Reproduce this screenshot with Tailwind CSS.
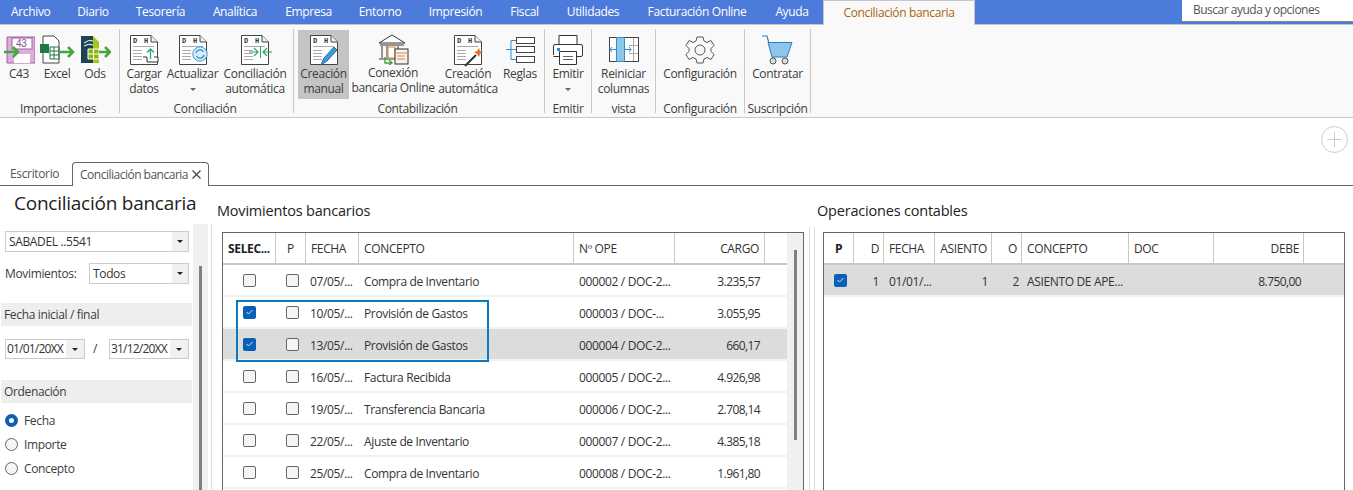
<!DOCTYPE html>
<html lang="es">
<head>
    <meta charset="UTF-8">
    <meta name="viewport" content="width=device-width, initial-scale=1.0">
    <title>Conciliación bancaria</title>
    <script src="https://cdn.jsdelivr.net/npm/@tailwindcss/browser@4"></script>
</head>
<body class="bg-white h-[490px] overflow-hidden font-['Open_Sans',sans-serif] text-[12px] leading-4 tracking-[-0.35px] text-[#3c3c3c]">
    <svg class="hidden">
        <symbol id="doc" viewBox="0 0 28 30">
            <path d="M.5.5H21L27.5 7V29.5H.5Z" fill="#fff" stroke="#444"/>
            <path d="M21 .5V7H27.5" fill="#eee" stroke="#444"/>
            <text x="3" y="8" font-size="7" font-family="Liberation Mono" font-weight="700" fill="#333">D</text>
            <text x="14" y="8" font-size="7" font-family="Liberation Mono" font-weight="700" fill="#333">H</text>
            <path d="M3 11.5H24M3 15.5H12M3 18.5H12M3 21.5H12M3 24.5H12" stroke="#aaa"/>
        </symbol>
    </svg>

    <!-- Menu -->
    <nav class="h-[25px] bg-[#4d7bdb] border-b border-[#c8c8c8] flex text-white">
        <a class="w-[63px] pl-[11px] pt-[4px]">Archivo</a>
        <a class="w-[60px] text-center pt-[4px]">Diario</a>
        <a class="w-[75px] text-center pt-[4px]">Tesorería</a>
        <a class="w-[74px] text-center pt-[4px]">Analítica</a>
        <a class="w-[73px] text-center pt-[4px]">Empresa</a>
        <a class="w-[70px] text-center pt-[4px]">Entorno</a>
        <a class="w-[81px] text-center pt-[4px]">Impresión</a>
        <a class="w-[57px] text-center pt-[4px]">Fiscal</a>
        <a class="w-[80px] text-center pt-[4px]">Utilidades</a>
        <a class="w-[128px] text-center pt-[4px]">Facturación Online</a>
        <a class="w-[62px] text-center pt-[4px]">Ayuda</a>
        <a class="w-[152px] h-[25px] bg-[#f9f9f9] border-x border-t border-[#c8c8c8] text-center pt-[4px] text-[#a8660a]">Conciliación bancaria</a>
        <div class="ml-auto w-[171px] h-[22px] bg-white border-b border-[#888] pl-[11px] pt-[2px] text-[#555] tracking-[-0.5px]">Buscar ayuda y opciones</div>
    </nav>

    <!-- Ribbon -->
    <section class="h-[93px] bg-[#f9f9f9] border-b border-[#c8c8c8] flex pt-[4px]">
        <div class="w-[120px] h-[84px] pt-px border-r border-[#c8c8c8] flex flex-col">
            <div class="flex flex-1">
                <div class="w-[38px] flex flex-col items-center">
                    <svg class="w-[32px] h-[30px] mt-[5px]" viewBox="0 0 32 30">
                        <path d="M6 2H34V28H6Z" transform="translate(-2)" fill="#d9b0d9" stroke="#a65ca6"/>
                        <rect x="9" y="3" width="20" height="11" fill="#fff" stroke="#a65ca6"/>
                        <text x="13" y="12" font-size="10" font-family="Liberation Sans" fill="#8e4a8e">43</text>
                        <rect x="11" y="19" width="16" height="9" fill="#fff"/>
                        <path d="M1 17H14M10 12L15 17L10 22" fill="none" stroke="#45a63c" stroke-width="2.5"/>
                    </svg>
                    <span class="mt-[1px]">C43</span>
                </div>
                <div class="w-[38px] flex flex-col items-center">
                    <svg class="w-[36px] h-[30px] mt-[5px] shrink-0" viewBox="0 0 36 30">
                        <path d="M4 1H15L20 6V28H4Z" fill="#fff" stroke="#444"/>
                        <rect x="1" y="9" width="9" height="9" fill="#1e7a45"/>
                        <path d="M11 12H20V24H11ZM11 16H20M11 20H20M15 12V24" fill="none" stroke="#1e7a45"/>
                        <path d="M21 17H33M29 12L34 17L29 22" fill="none" stroke="#45a63c" stroke-width="2.5"/>
                    </svg>
                    <span class="mt-[1px]">Excel</span>
                </div>
                <div class="w-[38px] flex flex-col items-center">
                    <svg class="w-[32px] h-[30px] mt-[5px] shrink-0" viewBox="0 0 32 30">
                        <path d="M2 1H14V28H2Z" fill="#1f4257"/>
                        <path d="M14 1L20 7V28H14Z" fill="#a8c616"/>
                        <path d="M5 8Q10 4 14 6M5 11Q10 8 14 10" fill="none" stroke="#fff"/>
                        <path d="M9 14H20V24H9ZM14.5 14V24M9 19H20" fill="#8db50f" stroke="#fff"/>
                        <path d="M20 17H30M26 12L31 17L26 22" fill="none" stroke="#45a63c" stroke-width="2.5"/>
                    </svg>
                    <span class="mt-[1px]">Ods</span>
                </div>
            </div>
            <div class="text-center -mb-[4px] pr-[3px]">Importaciones</div>
        </div>

        <div class="w-[174px] h-[84px] pt-px border-r border-[#c8c8c8] flex flex-col">
            <div class="flex flex-1">
                <div class="w-[48px] flex flex-col items-center">
                    <svg class="w-[28px] h-[30px] mt-[5px]"><use href="#doc"/></svg>
                    <svg class="w-[16px] h-[16px] -mt-[18px] ml-[14px]" viewBox="0 0 16 16"><path d="M0 10H4V15H15V10H11" fill="#fff" stroke="#333"/><path d="M7.5 12V2M4 5.5L7.5 2L11 5.5" fill="none" stroke="#2da56b" stroke-width="1.3"/></svg>
                    <span class="mt-[3px] text-center leading-[15px]">Cargar datos</span>
                </div>
                <div class="w-[49px] flex flex-col items-center">
                    <svg class="w-[28px] h-[30px] mt-[5px]"><use href="#doc"/></svg>
                    <svg class="w-[16px] h-[16px] -mt-[19px] ml-[14px]" viewBox="0 0 16 16"><circle cx="8" cy="8" r="7.2" fill="#d9edf9" stroke="#3b95d3"/><path d="M4 7A4 4 0 0 1 11.5 6M12 9A4 4 0 0 1 4.500 10" fill="none" stroke="#3b95d3" stroke-width="1.4"/></svg>
                    <span class="mt-[4px]">Actualizar</span>
                    <span class="mt-[6px] w-0 h-0 border-x-[3px] border-x-transparent border-t-[3px] border-t-[#666]"></span>
                </div>
                <div class="w-[76px] flex flex-col items-center">
                    <svg class="w-[28px] h-[30px] mt-[5px]"><use href="#doc"/></svg>
                    <svg class="w-[24px] h-[12px] -mt-[19px] ml-[12px] mb-[7px]" viewBox="0 0 24 12"><path d="M0 6H9M5 2L9 6L5 10M23 6H14M18 2L14 6L18 10" fill="none" stroke="#2da56b" stroke-width="1.2"/><path d="M11.500 0V12" stroke="#2da56b"/></svg>
                    <span class="mt-[1px] text-center leading-[15px]">Conciliación automática</span>
                </div>
            </div>
            <div class="text-center -mb-[4px] pr-[3px]">Conciliación</div>
        </div>

        <div class="w-[251px] h-[84px] pt-px border-r border-[#c8c8c8] flex flex-col">
            <div class="flex flex-1 pl-[4px]">
                <div class="w-[51px] h-[69px] bg-[#c4c4c4] flex flex-col items-center">
                    <div class="relative w-[28px] h-[30px] mt-[5px]">
                        <svg class="w-[28px] h-[30px]"><use href="#doc"/></svg>
                        <svg class="absolute left-[10px] top-[11px] w-[18px] h-[20px]" viewBox="0 0 18 20"><path d="M1 19L4 12L14 1L17 4L7 15Z" fill="#3b9ad8" stroke="#1f6fa8"/></svg>
                    </div>
                    <span class="mt-[1px] text-center leading-[15px]">Creación manual</span>
                </div>
                <div class="w-[88px] flex flex-col items-center">
                    <svg class="w-[32px] h-[32px] mt-[3px]" viewBox="0 0 32 32">
                        <path d="M2 10L15 2L28 10Z" fill="#fff" stroke="#333"/>
                        <path d="M3 12H27M5 13V25M10 13V25M21 13V25M2 26H20" stroke="#333" fill="none"/>
                        <rect x="11" y="14" width="7" height="11" fill="#fff" stroke="#e08a2e"/>
                        <rect x="18" y="16" width="13" height="15" fill="#f2f2f2" stroke="#333"/>
                        <path d="M18 20H31M20 23H28M20 26H28" stroke="#e08a2e"/>
                        <path d="M8 24V30H15M12 27L15 30L12 32" fill="none" stroke="#45a63c" stroke-width="1.4"/>
                    </svg>
                    <span class="text-center leading-[15px] whitespace-nowrap">Conexión<br>bancaria Online</span>
                </div>
                <div class="w-[62px] flex flex-col items-center">
                    <div class="relative w-[28px] h-[30px] mt-[5px]">
                        <svg class="w-[28px] h-[30px]"><use href="#doc"/></svg>
                        <svg class="absolute left-[10px] top-[12px] w-[20px] h-[20px]" viewBox="0 0 20 20"><path d="M1 19L12 8" stroke="#333" stroke-width="2"/><path d="M15 1L16 4L19 5L16 7L15 10L13 7L10 5L13 4Z" fill="#e0762a"/></svg>
                    </div>
                    <span class="mt-[1px] text-center leading-[15px] whitespace-nowrap">Creación<br>automática</span>
                </div>
                <div class="w-[42px] flex flex-col items-center">
                    <svg class="w-[30px] h-[30px] mt-[5px]" viewBox="0 0 30 30">
                        <path d="M1 14.500H11M6 5.500V24.500M6 5.500H11M6 24.500H11" fill="none" stroke="#2f8fd0"/>
                        <rect x="11.500" y="2.500" width="18" height="6" fill="#fff" stroke="#444"/>
                        <rect x="11.500" y="11.500" width="18" height="6" fill="#fff" stroke="#444"/>
                        <rect x="11.500" y="21.500" width="18" height="6" fill="#fff" stroke="#444"/>
                    </svg>
                    <span class="mt-[1px]">Reglas</span>
                </div>
            </div>
            <div class="text-center -mb-[4px] pr-[3px]">Contabilización</div>
        </div>

        <div class="w-[47px] h-[84px] pt-px border-r border-[#c8c8c8] flex flex-col items-center">
            <svg class="w-[30px] h-[30px] mt-[5px] flex-none" viewBox="0 0 30 30">
                <path d="M6 10V.5H24V10" fill="#fff" stroke="#333"/>
                <path d="M.5 20V11Q.5 9.500 2 9.500H28Q29.500 9.500 29.500 11V20Q29.500 21.500 28 21.500H.5" fill="#fff" stroke="#333"/>
                <rect x="4" y="13" width="3" height="3" fill="#2f8fd0"/>
                <path d="M6.500 16.500H23.500V29.500H6.500Z" fill="#fff" stroke="#333"/>
                <path d="M10 21.500H20M10 24.500H20" stroke="#666"/>
            </svg>
            <span class="mt-[1px]">Emitir</span>
            <span class="mt-[6px] w-0 h-0 border-x-[3px] border-x-transparent border-t-[3px] border-t-[#666]"></span>
            <span class="mt-auto -mb-[4px]">Emitir</span>
        </div>

        <div class="w-[64px] h-[84px] pt-px border-r border-[#c8c8c8] flex flex-col items-center">
            <svg class="w-[30px] h-[26px] mt-[7px] flex-none" viewBox="0 0 30 26">
                <rect x=".5" y=".5" width="29" height="24" fill="#fff" stroke="#444"/>
                <path d="M20 8.500H29M20 16.500H29M24.500 1V24" stroke="#aaa"/>
                <rect x="7.500" y=".5" width="8" height="24" fill="#8ec6ea" stroke="#2f8fd0"/>
                <path d="M1 12.500H7M3 10L1 12.500L3 15M16 12.500H22M20 10L22 12.500L20 15" fill="none" stroke="#2f8fd0"/>
            </svg>
            <span class="mt-[3px] text-center leading-[15px]">Reiniciar columnas</span>
            <span class="mt-auto -mb-[4px]">vista</span>
        </div>

        <div class="w-[89px] h-[84px] pt-px border-r border-[#c8c8c8] flex flex-col items-center">
            <svg class="w-[30px] h-[30px] mt-[5px] flex-none" viewBox="0 0 30 30">
                <path d="M12 2H18L19 6L22 7.500L26 5.500L29 10.500L26 13.500V16.500L29 19.500L26 24.500L22 22.500L19 24L18 28H12L11 24L8 22.500L4 24.500L1 19.500L4 16.500V13.500L1 10.500L4 5.500L8 7.500L11 6Z" fill="none" stroke="#555"/>
                <circle cx="15" cy="15" r="5" fill="none" stroke="#555"/>
            </svg>
            <span class="mt-[1px]">Configuración</span>
            <span class="mt-auto -mb-[4px]">Configuración</span>
        </div>

        <div class="w-[66px] h-[84px] pt-px border-r border-[#c8c8c8] flex flex-col items-center">
            <svg class="w-[32px] h-[30px] mt-[5px] flex-none" viewBox="0 0 32 30">
                <path d="M0 1H5L11 23" fill="none" stroke="#2f7fc0" stroke-width="1.2"/>
                <path d="M6 7.500H30L25 22H10Z" fill="#8ec6ea" stroke="#2f7fc0"/>
                <circle cx="11" cy="26" r="3" fill="#ddd" stroke="#555"/>
                <circle cx="23" cy="26" r="3" fill="#ddd" stroke="#555"/>
            </svg>
            <span class="mt-[1px]">Contratar</span>
            <span class="mt-auto -mb-[4px] whitespace-nowrap">Suscripción</span>
        </div>
    </section>

    <!-- Document tabs -->
    <div class="h-[68px] border-b border-[#666] flex flex-col">
        <div class="h-[44px] flex justify-end pt-[8px] pr-[5px]">
            <div class="w-[27px] h-[27px] rounded-full border border-[#ccc] relative">
                <span class="absolute left-[5px] top-[12px] w-[15px] h-px bg-[#ccc]"></span>
                <span class="absolute left-[12px] top-[5px] h-[15px] w-px bg-[#ccc]"></span>
            </div>
        </div>
        <div class="flex items-end h-[23px]">
            <div class="w-[72px] pl-[10px] pb-[3px] text-[#555]">Escritorio</div>
            <div class="w-[137px] h-[24px] -mb-px bg-white border-x border-t border-[#666] rounded-t-[4px] flex items-center pl-[7px] gap-[4px] text-[#555] whitespace-nowrap tracking-[-0.5px]">
                Conciliación bancaria
                <svg class="w-[9px] h-[9px] flex-none" viewBox="0 0 9 9"><path d="M.5.5L8.500 8.500M8.500.5L.5 8.500" stroke="#444" stroke-width="1.2"/></svg>
            </div>
        </div>
    </div>

    <main class="flex h-[304px] relative overflow-hidden">
        <!-- Filters -->
        <aside class="w-[193px] flex-none">
            <h1 class="text-[19px] leading-6 text-[#222] whitespace-nowrap pl-[14px] pt-[5px] tracking-[-0.25px]">Conciliación bancaria</h1>
            <div class="mt-[16px] ml-[5px] w-[184px] h-[21px] border border-[#ccc] flex justify-between">
                <span class="pl-[3px] leading-[19px] text-[#333]">SABADEL ..5541</span>
                <span class="w-[16px] bg-[#f0f0f0] flex items-center justify-center"><span class="w-0 h-0 border-x-[3px] border-x-transparent border-t-[3px] border-t-[#222]"></span></span>
            </div>
            <div class="mt-[11px] ml-[5px] flex items-center">
                <span class="w-[84px]">Movimientos:</span>
                <div class="w-[100px] h-[21px] border border-[#ccc] flex justify-between">
                    <span class="pl-[3px] leading-[19px] text-[#333]">Todos</span>
                    <span class="w-[16px] bg-[#f0f0f0] flex items-center justify-center"><span class="w-0 h-0 border-x-[3px] border-x-transparent border-t-[3px] border-t-[#222]"></span></span>
                </div>
            </div>
            <div class="mt-[19px] ml-[1px] w-[191px] h-[23px] bg-[#eeeeee] pl-[3px] leading-[23px]">Fecha inicial / final</div>
            <div class="mt-[13px] ml-[5px] flex items-center text-[#333]">
                <div class="w-[80px] h-[20px] border border-[#ccc] flex justify-between">
                    <span class="pl-[1px] leading-[18px] whitespace-nowrap tracking-[-0.8px]">01/01/20XX</span>
                    <span class="w-[18px] bg-[#f0f0f0] flex items-center justify-center"><span class="w-0 h-0 border-x-[3px] border-x-transparent border-t-[3px] border-t-[#222]"></span></span>
                </div>
                <span class="w-[24px] pl-[8px]">/</span>
                <div class="w-[80px] h-[20px] border border-[#ccc] flex justify-between">
                    <span class="pl-[1px] leading-[18px] whitespace-nowrap tracking-[-0.8px]">31/12/20XX</span>
                    <span class="w-[18px] bg-[#f0f0f0] flex items-center justify-center"><span class="w-0 h-0 border-x-[3px] border-x-transparent border-t-[3px] border-t-[#222]"></span></span>
                </div>
            </div>
            <div class="mt-[21px] ml-[1px] w-[191px] h-[23px] bg-[#eeeeee] pl-[3px] leading-[23px]">Ordenación</div>
            <div class="mt-[11px] ml-[5px] flex flex-col gap-[11px]">
                <label class="flex items-center gap-[6px] h-[13px]"><span class="w-[13px] h-[13px] rounded-full border-[4px] border-[#0a5fb8] bg-white"></span>Fecha</label>
                <label class="flex items-center gap-[6px] h-[13px]"><span class="w-[13px] h-[13px] rounded-full border border-[#666] bg-[#f5f5f5]"></span>Importe</label>
                <label class="flex items-center gap-[6px] h-[13px]"><span class="w-[13px] h-[13px] rounded-full border border-[#666] bg-[#f5f5f5]"></span>Concepto</label>
            </div>
        </aside>
        <div class="w-[15px] mt-[38px] bg-[#f0f0f0] flex justify-center flex-none">
            <span class="w-[3px] h-full mt-[42px] bg-[#808080]"></span>
        </div>
        <div class="w-[3px] flex-none"></div>

        <!-- Movimientos bancarios -->
        <section class="w-[593px] flex-none border-l border-[#ddd] mt-[38px] relative">
            <h2 class="absolute -top-[23px] left-[5px] text-[14.500px] leading-5 text-[#222] whitespace-nowrap tracking-[-0.2px]">Movimientos bancarios</h2>
            <div class="mt-[8px] ml-[10px] w-[582px] h-[258px] border border-b-0 border-[#666] flex overflow-hidden">
                <div class="w-[564px] flex-none">
                    <div class="h-[32px] border-b-2 border-[#c8c8c8] grid grid-cols-[53px_30px_53px_215px_101px_90px_22px] items-center text-[#333]">
                        <span class="h-full leading-[32px] border-r border-[#c8c8c8] pl-[5px] font-bold text-[#222] whitespace-nowrap">SELEC...</span>
                        <span class="h-full leading-[32px] border-r border-[#c8c8c8] text-center">P</span>
                        <span class="h-full leading-[32px] border-r border-[#c8c8c8] pl-[5px]">FECHA</span>
                        <span class="h-full leading-[32px] border-r border-[#c8c8c8] pl-[5px]">CONCEPTO</span>
                        <span class="h-full leading-[32px] border-r border-[#c8c8c8] pl-[5px]">Nº OPE</span>
                        <span class="h-full leading-[32px] border-r border-[#c8c8c8] text-right pr-[5px]">CARGO</span>
                        <span></span>
                    </div>
                    <div class="h-[32px] pt-[3px] border-b-2 border-[#f2f2f2] grid grid-cols-[53px_30px_53px_215px_101px_90px_22px] items-center text-[#333] whitespace-nowrap">
                        <span class="flex justify-center -mt-[3px]"><span class="w-[13px] h-[13px] rounded-[2px] border border-[#666] bg-[#f5f5f5]"></span></span>
                        <span class="flex justify-center -mt-[3px] pl-[2px]"><span class="w-[13px] h-[13px] rounded-[2px] border border-[#666] bg-[#f5f5f5]"></span></span>
                        <span class="pl-[4px]">07/05/...</span>
                        <span class="pl-[5px]">Compra de Inventario</span>
                        <span class="pl-[5px]">000002 / DOC-2...</span>
                        <span class="text-right pr-[5px] tracking-[-0.6px]">3.235,57</span>
                    </div>
                    <div class="h-[32px] pt-[3px] border-b-2 border-[#f2f2f2] grid grid-cols-[53px_30px_53px_215px_101px_90px_22px] items-center text-[#333] whitespace-nowrap">
                        <span class="flex justify-center -mt-[3px]"><span class="w-[13px] h-[13px] rounded-[2px] bg-[#0a5fb8] flex items-center justify-center"><svg class="w-[7px] h-[6px]" viewBox="0 0 7 6"><path d="M.5 3L2.500 5L6.500 1" fill="none" stroke="#cfe3f7"/></svg></span></span>
                        <span class="flex justify-center -mt-[3px] pl-[2px]"><span class="w-[13px] h-[13px] rounded-[2px] border border-[#666] bg-[#f5f5f5]"></span></span>
                        <span class="pl-[4px]">10/05/...</span>
                        <span class="pl-[5px]">Provisión de Gastos</span>
                        <span class="pl-[5px]">000003 / DOC-...</span>
                        <span class="text-right pr-[5px] tracking-[-0.6px]">3.055,95</span>
                    </div>
                    <div class="h-[32px] pt-[3px] border-b-2 border-[#f2f2f2] bg-[#dcdcdc] grid grid-cols-[53px_30px_53px_215px_101px_90px_22px] items-center text-[#333] whitespace-nowrap">
                        <span class="flex justify-center -mt-[3px]"><span class="w-[13px] h-[13px] rounded-[2px] bg-[#0a5fb8] flex items-center justify-center"><svg class="w-[7px] h-[6px]" viewBox="0 0 7 6"><path d="M.5 3L2.500 5L6.500 1" fill="none" stroke="#cfe3f7"/></svg></span></span>
                        <span class="flex justify-center -mt-[3px] pl-[2px]"><span class="w-[13px] h-[13px] rounded-[2px] border border-[#666] bg-[#f5f5f5]"></span></span>
                        <span class="pl-[4px]">13/05/...</span>
                        <span class="pl-[5px]">Provisión de Gastos</span>
                        <span class="pl-[5px]">000004 / DOC-2...</span>
                        <span class="text-right pr-[5px] tracking-[-0.6px]">660,17</span>
                    </div>
                    <div class="h-[32px] pt-[3px] border-b-2 border-[#f2f2f2] grid grid-cols-[53px_30px_53px_215px_101px_90px_22px] items-center text-[#333] whitespace-nowrap">
                        <span class="flex justify-center -mt-[3px]"><span class="w-[13px] h-[13px] rounded-[2px] border border-[#666] bg-[#f5f5f5]"></span></span>
                        <span class="flex justify-center -mt-[3px] pl-[2px]"><span class="w-[13px] h-[13px] rounded-[2px] border border-[#666] bg-[#f5f5f5]"></span></span>
                        <span class="pl-[4px]">16/05/...</span>
                        <span class="pl-[5px]">Factura Recibida</span>
                        <span class="pl-[5px]">000005 / DOC-2...</span>
                        <span class="text-right pr-[5px] tracking-[-0.6px]">4.926,98</span>
                    </div>
                    <div class="h-[32px] pt-[3px] border-b-2 border-[#f2f2f2] grid grid-cols-[53px_30px_53px_215px_101px_90px_22px] items-center text-[#333] whitespace-nowrap">
                        <span class="flex justify-center -mt-[3px]"><span class="w-[13px] h-[13px] rounded-[2px] border border-[#666] bg-[#f5f5f5]"></span></span>
                        <span class="flex justify-center -mt-[3px] pl-[2px]"><span class="w-[13px] h-[13px] rounded-[2px] border border-[#666] bg-[#f5f5f5]"></span></span>
                        <span class="pl-[4px]">19/05/...</span>
                        <span class="pl-[5px]">Transferencia Bancaria</span>
                        <span class="pl-[5px]">000006 / DOC-2...</span>
                        <span class="text-right pr-[5px] tracking-[-0.6px]">2.708,14</span>
                    </div>
                    <div class="h-[32px] pt-[3px] border-b-2 border-[#f2f2f2] grid grid-cols-[53px_30px_53px_215px_101px_90px_22px] items-center text-[#333] whitespace-nowrap">
                        <span class="flex justify-center -mt-[3px]"><span class="w-[13px] h-[13px] rounded-[2px] border border-[#666] bg-[#f5f5f5]"></span></span>
                        <span class="flex justify-center -mt-[3px] pl-[2px]"><span class="w-[13px] h-[13px] rounded-[2px] border border-[#666] bg-[#f5f5f5]"></span></span>
                        <span class="pl-[4px]">22/05/...</span>
                        <span class="pl-[5px]">Ajuste de Inventario</span>
                        <span class="pl-[5px]">000007 / DOC-2...</span>
                        <span class="text-right pr-[5px] tracking-[-0.6px]">4.385,18</span>
                    </div>
                    <div class="h-[32px] pt-[3px] border-b-2 border-[#f2f2f2] grid grid-cols-[53px_30px_53px_215px_101px_90px_22px] items-center text-[#333] whitespace-nowrap">
                        <span class="flex justify-center -mt-[3px]"><span class="w-[13px] h-[13px] rounded-[2px] border border-[#666] bg-[#f5f5f5]"></span></span>
                        <span class="flex justify-center -mt-[3px] pl-[2px]"><span class="w-[13px] h-[13px] rounded-[2px] border border-[#666] bg-[#f5f5f5]"></span></span>
                        <span class="pl-[4px]">25/05/...</span>
                        <span class="pl-[5px]">Compra de Inventario</span>
                        <span class="pl-[5px]">000008 / DOC-2...</span>
                        <span class="text-right pr-[5px] tracking-[-0.6px]">1.961,80</span>
                    </div>
                </div>
                <div class="flex-1 bg-[#f0f0f0] flex justify-center">
                    <span class="w-[3px] h-[190px] mt-[17px] bg-[#808080]"></span>
                </div>
            </div>
            <!-- selection highlight -->
            <div class="absolute left-[24px] top-[76px] w-[253px] h-[62px] border-2 border-[#0a7cba]"></div>
        </section>

        <div class="w-[5px] flex-none"></div>
        <div class="w-px mt-[41px] bg-[#ddd] flex-none"></div>
        <div class="w-[4px] flex-none"></div>

        <!-- Operaciones contables -->
        <section class="w-[539px] flex-none border-l border-[#ddd] mt-[41px] relative">
            <h2 class="absolute -top-[26px] left-[2px] text-[14.500px] leading-5 text-[#222] whitespace-nowrap tracking-[-0.2px]">Operaciones contables</h2>
            <div class="mt-[5px] ml-[8px] w-[522px] h-[258px] border border-b-0 border-[#666]">
                <div class="h-[32px] border-b-2 border-[#c8c8c8] grid grid-cols-[30px_30px_51px_57px_30px_107px_85px_90px_1fr] items-center text-[#333]">
                    <span class="h-full leading-[32px] border-r border-[#c8c8c8] text-center font-bold text-[#222]">P</span>
                    <span class="h-full leading-[32px] border-r border-[#c8c8c8] text-right pr-[4px]">D</span>
                    <span class="h-full leading-[32px] border-r border-[#c8c8c8] pl-[5px]">FECHA</span>
                    <span class="h-full leading-[32px] border-r border-[#c8c8c8] text-right pr-[4px]">ASIENTO</span>
                    <span class="h-full leading-[32px] border-r border-[#c8c8c8] text-right pr-[4px]">O</span>
                    <span class="h-full leading-[32px] border-r border-[#c8c8c8] pl-[5px]">CONCEPTO</span>
                    <span class="h-full leading-[32px] border-r border-[#c8c8c8] pl-[5px]">DOC</span>
                    <span class="h-full leading-[32px] border-r border-[#c8c8c8] text-right pr-[4px]">DEBE</span>
                    <span></span>
                </div>
                <div class="h-[32px] pt-[3px] border-b-2 border-[#f2f2f2] bg-[#dcdcdc] grid grid-cols-[30px_30px_51px_57px_30px_107px_85px_90px_1fr] items-center text-[#333] whitespace-nowrap">
                    <span class="flex justify-center -mt-[3px] pl-[3px]"><span class="w-[13px] h-[13px] rounded-[2px] bg-[#0a5fb8] flex items-center justify-center"><svg class="w-[7px] h-[6px]" viewBox="0 0 7 6"><path d="M.5 3L2.500 5L6.500 1" fill="none" stroke="#cfe3f7"/></svg></span></span>
                    <span class="text-right pr-[5px]">1</span>
                    <span class="pl-[5px]">01/01/...</span>
                    <span class="text-right pr-[4px]">1</span>
                    <span class="text-right pr-[3px]">2</span>
                    <span class="pl-[5px]">ASIENTO DE APE...</span>
                    <span></span>
                    <span class="text-right pr-[3px] tracking-[-0.6px]">8.750,00</span>
                    <span></span>
                </div>
            </div>
        </section>
    </main>
</body>
</html>
